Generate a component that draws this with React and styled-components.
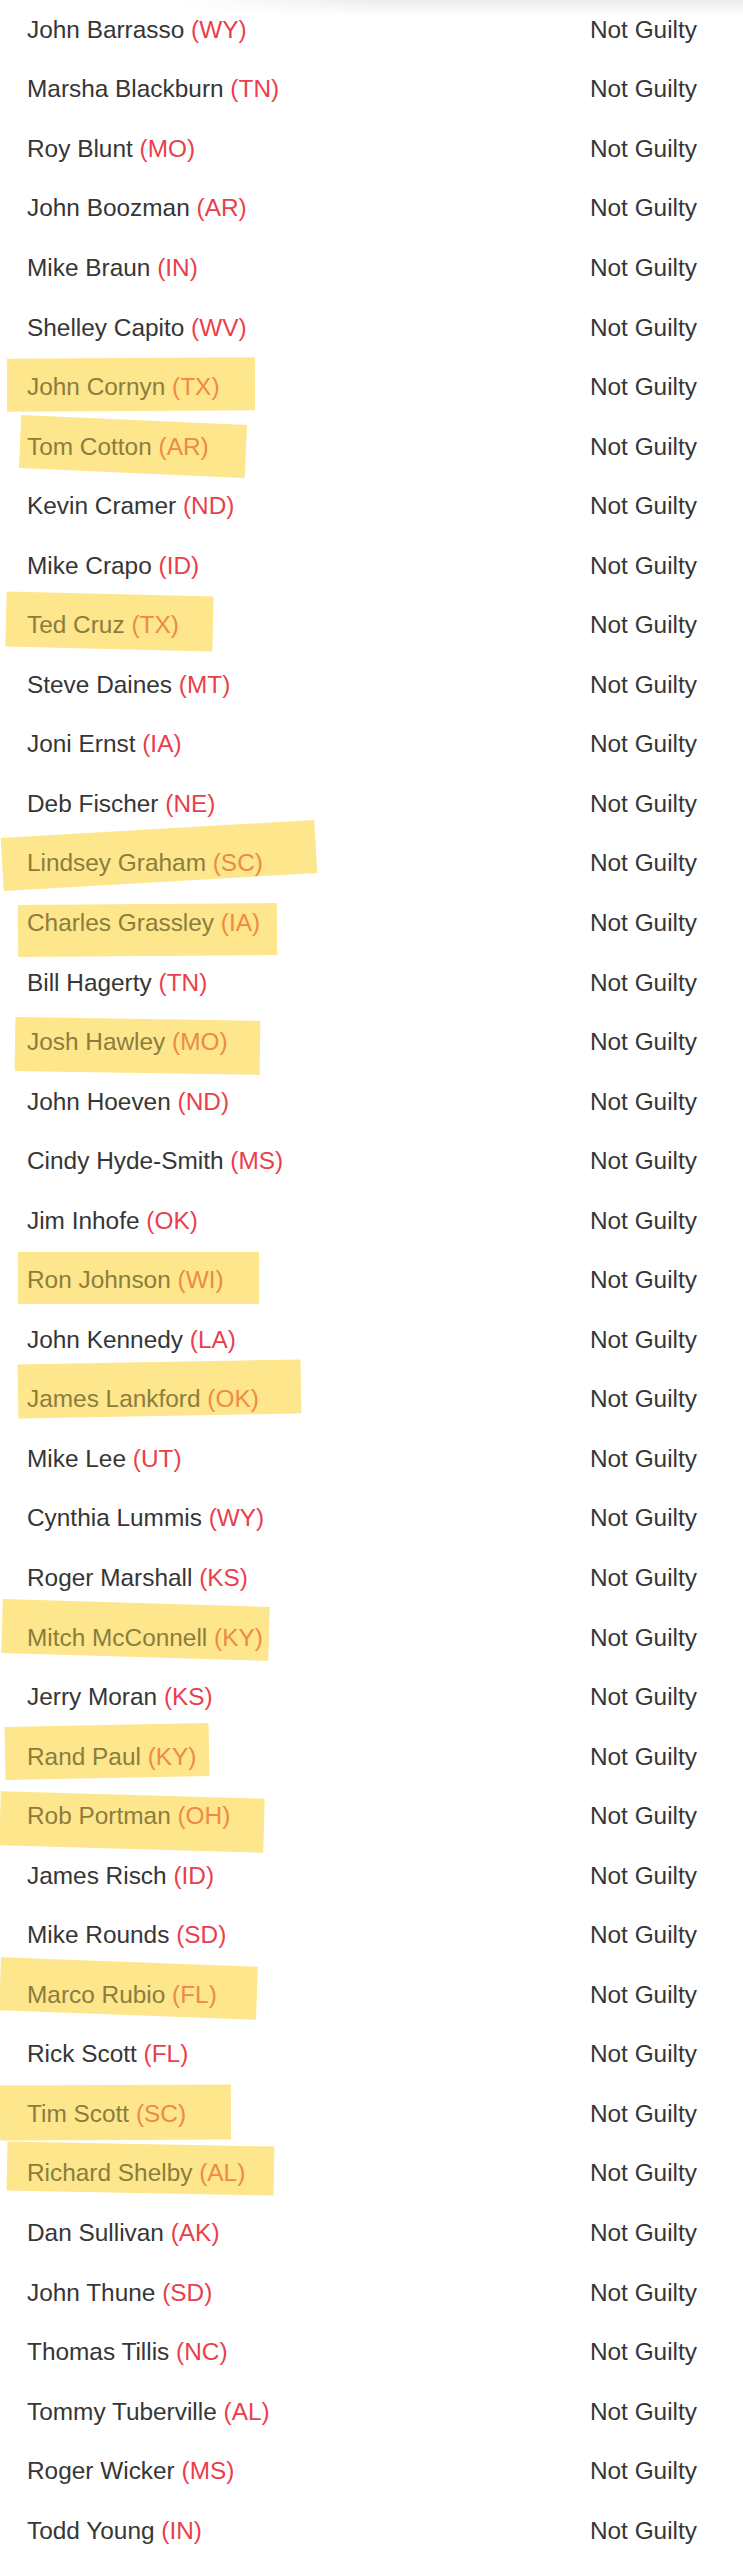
import React from "react";
import styled, { createGlobalStyle } from "styled-components";

const GlobalStyle = createGlobalStyle`
  html, body {
    margin: 0;
    padding: 0;
    background: #fff;
  }
  body {
    font-family: "Liberation Sans", Arial, sans-serif;
  }
`;

const Page = styled.main`
  position: relative;
  width: 743px;
  background: #fff;
`;

const TopShadow = styled.div`
  position: absolute;
  top: 0;
  left: 180px;
  right: 0;
  height: 16px;
  background: linear-gradient(to bottom, rgba(0, 0, 0, 0.075), rgba(0, 0, 0, 0));
  -webkit-mask-image: linear-gradient(to right, transparent, #000 35%);
  mask-image: linear-gradient(to right, transparent, #000 35%);
  pointer-events: none;
  z-index: 2;
`;

const List = styled.ul`
  list-style: none;
  margin: 0;
  padding: 0;
`;

const Row = styled.li`
  position: relative;
  display: flex;
  align-items: center;
  justify-content: space-between;
  height: 59.56px;
  padding: 0 46px 0 27px;
  font-size: 24.4px;
  line-height: 28px;
  color: #363636;
`;

const Highlight = styled.span`
  position: absolute;
  z-index: 0;
  background: #fde68c;
  transform-origin: center;
`;

const Name = styled.span`
  position: relative;
  z-index: 1;
  color: ${(p) => (p.$marked ? "#8c7d3c" : "#363636")};
  white-space: nowrap;
`;

const State = styled.span`
  color: ${(p) => (p.$marked ? "#ee8a46" : "#ea3f4b")};
`;

const Verdict = styled.span`
  position: relative;
  z-index: 1;
  color: #363636;
  white-space: nowrap;
`;

// highlight marks: x, width, center offset from row top, height, rotation
const senators = [
  ["John Barrasso", "WY"],
  ["Marsha Blackburn", "TN"],
  ["Roy Blunt", "MO"],
  ["John Boozman", "AR"],
  ["Mike Braun", "IN"],
  ["Shelley Capito", "WV"],
  ["John Cornyn", "TX", [7, 248, 27.1, 53, -0.3]],
  ["Tom Cotton", "AR", [20, 226, 29.6, 53, 2.5]],
  ["Kevin Cramer", "ND"],
  ["Mike Crapo", "ID"],
  ["Ted Cruz", "TX", [6, 207, 26.2, 54.5, 1.4]],
  ["Steve Daines", "MT"],
  ["Joni Ernst", "IA"],
  ["Deb Fischer", "NE"],
  ["Lindsey Graham", "SC", [2, 314, 21.4, 52.5, -3.3]],
  ["Charles Grassley", "IA", [18, 259, 36.6, 52, -0.4]],
  ["Bill Hagerty", "TN"],
  ["Josh Hawley", "MO", [15, 245, 33.5, 54, 0.9]],
  ["John Hoeven", "ND"],
  ["Cindy Hyde-Smith", "MS"],
  ["Jim Inhofe", "OK"],
  ["Ron Johnson", "WI", [18, 241, 27.2, 52, 0]],
  ["John Kennedy", "LA"],
  ["James Lankford", "OK", [18, 283, 19.6, 54, -1]],
  ["Mike Lee", "UT"],
  ["Cynthia Lummis", "WY"],
  ["Roger Marshall", "KS"],
  ["Mitch McConnell", "KY", [2, 267, 21.6, 53.5, 1.7]],
  ["Jerry Moran", "KS"],
  ["Rand Paul", "KY", [5, 204, 24, 52.5, -1.1]],
  ["Rob Portman", "OH", [0, 264, 35.7, 54, 1.6]],
  ["James Risch", "ID"],
  ["Mike Rounds", "SD"],
  ["Marco Rubio", "FL", [0, 257, 23.5, 53, 2.1]],
  ["Rick Scott", "FL"],
  ["Tim Scott", "SC", [0, 231, 27.7, 54.5, -0.3]],
  ["Richard Shelby", "AL", [7, 267, 24.3, 49, 1.1]],
  ["Dan Sullivan", "AK"],
  ["John Thune", "SD"],
  ["Thomas Tillis", "NC"],
  ["Tommy Tuberville", "AL"],
  ["Roger Wicker", "MS"],
  ["Todd Young", "IN"],
];

const App = () => {
  return (
    <Page>
      <GlobalStyle />
      <TopShadow />
      <List>
        {senators.map(([name, state, mark]) => (
          <Row key={name}>
            {mark && (
              <Highlight
                style={{
                  left: mark[0],
                  width: mark[1],
                  top: mark[2] - mark[3] / 2,
                  height: mark[3],
                  transform: `rotate(${mark[4]}deg)`,
                }}
              />
            )}
            <Name $marked={!!mark}>
              {name} <State $marked={!!mark}>({state})</State>
            </Name>
            <Verdict>Not Guilty</Verdict>
          </Row>
        ))}
      </List>
    </Page>
  );
};

export default App;
